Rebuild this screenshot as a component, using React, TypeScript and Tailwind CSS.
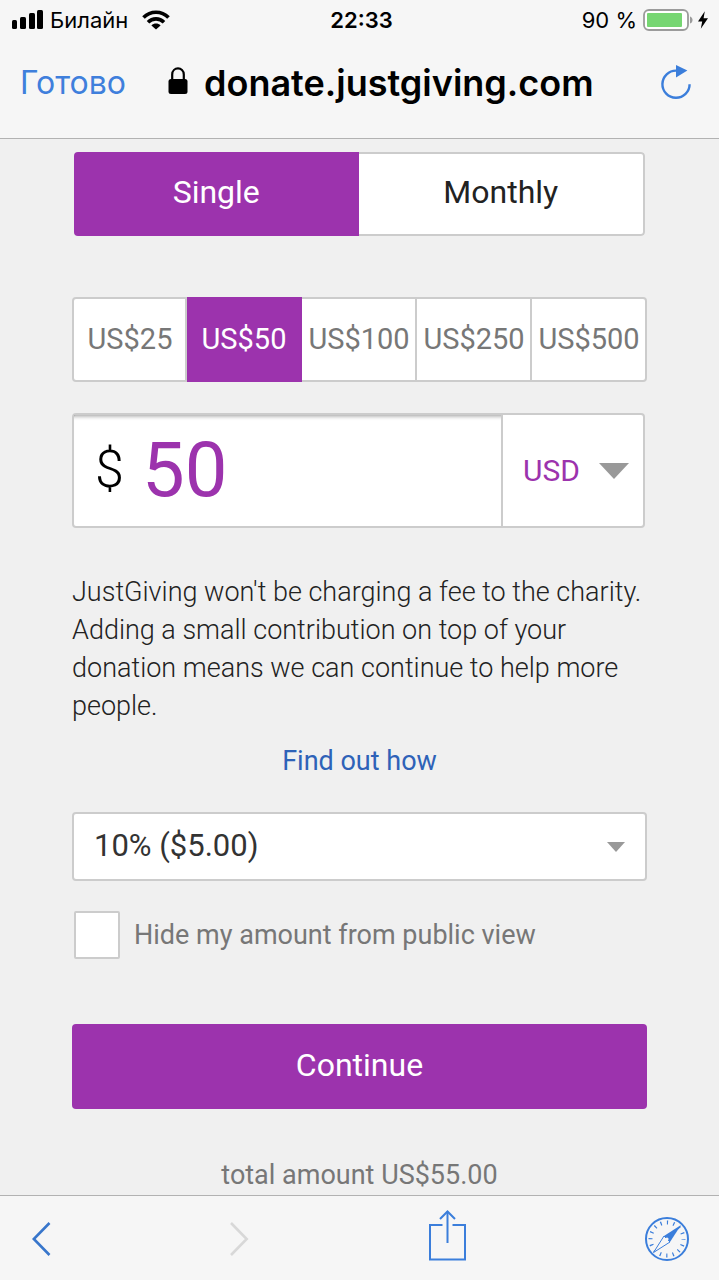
import { useState } from 'react'

const presets = [25, 50, 100, 250, 500]

function StatusBar() {
  return (
    <div className="grid grid-cols-3 items-center h-10 pl-3 pr-2.5 text-[22px] leading-7 text-black">
      <div className="flex items-center">
        <svg className="w-8 h-5" viewBox="0 0 32 20">
          <rect x="0" y="10" width="5" height="9" rx="1.5" />
          <rect x="8" y="7" width="6" height="12" rx="1.5" />
          <rect x="17" y="3" width="6" height="16" rx="1.5" />
          <rect x="25" y="0" width="6" height="19" rx="1.5" />
        </svg>
        <span className="ml-1.5">Билайн</span>
        <svg className="w-7 h-5 ml-3.5" viewBox="0 0 28 20">
          <g fill="none" stroke="black" strokeWidth="3.6">
            <path d="M1.5 7.6 C8.5 0.4 19.5 0.4 26.5 7.6" />
            <path d="M6 12.2 C10.5 7.8 17.5 7.8 22 12.2" />
          </g>
          <path d="M9.4 15.4 C12 13 16 13 18.6 15.4 L14 19.6 Z" />
        </svg>
      </div>
      <div className="pl-0.5 text-center font-semibold">22:33</div>
      <div className="flex items-center justify-end">
        <span>90 %</span>
        <svg className="w-[50px] h-[22px] ml-1.5" viewBox="0 0 50 22">
          <rect x="1" y="1" width="44" height="20" rx="5" fill="white" stroke="#9b9b9b" strokeWidth="1.8" />
          <rect x="4" y="4" width="35" height="14" rx="1" fill="#76d672" />
          <path d="M47 7.5 C50.4 8.5 50.4 13.5 47 14.5 Z" fill="#9b9b9b" />
        </svg>
        <svg className="w-3 h-5 ml-1" viewBox="0 0 12 20">
          <path d="M7.8 1.2 L1 11.4 H5.2 L3.8 18.8 L11 8.2 H6.6 Z" />
        </svg>
      </div>
    </div>
  )
}

function NavBar() {
  return (
    <div className="flex items-center h-[98px] pl-5 pr-7 pb-3">
      <button className="text-[32px] leading-10 text-[#3f7fdc]">Готово</button>
      <div className="flex items-center ml-[42px]">
        <svg className="w-5 h-7 mr-4 mb-1" viewBox="0 0 20 28">
          <path d="M4.2 14 V7.5 C4.2 -0.6 15.8 -0.6 15.8 7.5 V14" fill="none" stroke="black" strokeWidth="2.2" />
          <rect x="0.5" y="12" width="19" height="15" rx="2.5" />
        </svg>
        <span className="text-[36px] leading-10 font-semibold text-black">donate.justgiving.com</span>
      </div>
      <button aria-label="Reload" className="ml-auto">
        <svg className="w-[30px] h-9" viewBox="0 0 30 36">
          <path d="M28.6 19.2 A13.6 13.6 0 1 1 15.5 5.6" fill="none" stroke="#3b7edb" strokeWidth="2.4" />
          <path d="M15 0 L26.4 5.6 L15 12.6 Z" fill="#3b7edb" />
        </svg>
      </button>
    </div>
  )
}

function Toolbar() {
  return (
    <footer className="flex items-center justify-between h-[85px] pt-0.5 pl-8 pr-[29px] border-t border-[#b2b2b2] bg-[#f6f6f6]">
      <button aria-label="Back">
        <svg className="w-5 h-9" viewBox="0 0 20 36">
          <path d="M17.5 2 L1.8 18 L17.5 34" fill="none" stroke="#3876cb" strokeWidth="2.6" />
        </svg>
      </button>
      <button aria-label="Forward" disabled>
        <svg className="w-5 h-9" viewBox="0 0 20 36">
          <path d="M1 2 L16.7 18 L1 34" fill="none" stroke="#d8d8d8" strokeWidth="2.6" />
        </svg>
      </button>
      <button aria-label="Share" className="pb-1.5">
        <svg className="w-[38px] h-[52px]" viewBox="0 0 38 52" fill="none" stroke="#3b7edb" strokeWidth="2">
          <path d="M14.5 15 H2 V49.5 H37 V15 H24.5" />
          <path d="M19.5 33 V1.5" />
          <path d="M12 9 L19.5 1.5 L27 9" />
        </svg>
      </button>
      <button aria-label="Open in Safari">
        <svg className="w-[46px] h-[46px]" viewBox="0 0 46 46">
          <circle cx="23" cy="23" r="21" fill="none" stroke="#3b7edb" strokeWidth="2" />
          <circle cx="23" cy="23" r="16.5" fill="none" stroke="#3b7edb" strokeWidth="4" strokeDasharray="1.2 5.28" strokeDashoffset="0.6" />
          <path d="M37 9 L26 26 L20 20 Z" fill="#3b7edb" />
          <path d="M9.5 36.5 L20 20 L26 26 Z" fill="#f6f6f6" stroke="#3b7edb" strokeWidth="1" />
          <circle cx="23" cy="23" r="1.6" fill="#f6f6f6" />
        </svg>
      </button>
    </footer>
  )
}

export default function App() {
  const [frequency, setFrequency] = useState<'Single' | 'Monthly'>('Single')
  const [amount, setAmount] = useState('50')

  return (
    <div className="min-h-screen flex flex-col bg-[#f0f0f0] font-['Roboto',sans-serif]">
      <header className="border-b border-[#b2b2b2] bg-[#f6f6f6] font-['Inter',sans-serif]">
        <StatusBar />
        <NavBar />
      </header>

      <main className="flex-1 px-[72px] pt-[13px]">
        <div className="flex h-[84px] mx-0.5 rounded overflow-hidden">
          {(['Single', 'Monthly'] as const).map((f) => (
            <button
              key={f}
              onClick={() => setFrequency(f)}
              className={`flex-1 pb-1 text-[32px] ${frequency === f ? 'bg-[#9c33ad] text-white' : 'bg-white text-[#222] border-2 border-l-0 border-[#ccc] rounded-r'}`}
            >
              {f}
            </button>
          ))}
        </div>

        <div className="grid grid-cols-5 h-[85px] mt-[61px]">
          {presets.map((p) => (
            <button
              key={p}
              onClick={() => setAmount(String(p))}
              className={`border-y-2 border-r-2 first:border-l-2 first:rounded-l last:rounded-r pl-px text-[29px] ${amount === String(p) ? 'bg-[#9c33ad] border-[#9c33ad] text-white' : 'bg-white border-[#ccc] text-[#777]'}`}
            >
              US${p}
            </button>
          ))}
        </div>

        <div className="flex h-[115px] mt-[31px] mr-0.5 bg-white border-2 border-[#ccc] rounded">
          <div className="flex flex-1 min-w-0 items-center shadow-[inset_0_5px_4px_-4px_#999]">
            <label htmlFor="amount" className="w-[68px] pl-[21px] pb-0.5 text-[52px] leading-[60px] text-black font-light">$</label>
            <input
              id="amount"
              value={amount}
              onChange={(e) => setAmount(e.target.value)}
              className="flex-1 min-w-0 pb-0.5 text-[76px] leading-[90px] text-[#9c33ad] outline-none"
            />
          </div>
          <div className="relative w-[142px] border-l-2 border-[#ccc]">
            <select aria-label="Currency" className="appearance-none w-full h-full pl-5 text-[30px] text-[#9c33ad] outline-none">
              <option>USD</option>
            </select>
            <svg className="absolute right-3.5 top-1/2 -translate-y-1/2 w-[30px] h-4 pointer-events-none" viewBox="0 0 30 16">
              <path d="M0 0 H30 L15 16 Z" fill="#999" />
            </svg>
          </div>
        </div>

        <p className="mt-[45px] text-[27px] leading-[38px] font-light text-[#222]">
          JustGiving won't be charging a fee to the charity. Adding a small contribution on top of your donation means we can continue to help more people.
        </p>
        <div className="mt-[17px] text-center text-[27px] leading-[38px]">
          <a href="#" className="text-[#2e62b8]">Find out how</a>
        </div>

        <div className="relative h-[69px] mt-8 bg-white border-2 border-[#ccc] rounded">
          <select aria-label="Contribution" className="appearance-none w-full h-full pl-5 pb-px text-[31px] text-[#333] outline-none">
            <option>10% ($5.00)</option>
          </select>
          <svg className="absolute right-5 top-1/2 -translate-y-1/2 w-[18px] h-[10px] pointer-events-none" viewBox="0 0 18 10">
            <path d="M0 0 H18 L9 10 Z" fill="#999" />
          </svg>
        </div>

        <div className="flex items-center mt-[30px] mx-0.5">
          <input id="hide" type="checkbox" className="appearance-none w-[46px] h-12 bg-white border-2 border-[#ccc] rounded-xs checked:bg-[#9c33ad]" />
          <label htmlFor="hide" className="pl-[14px] text-[27px] leading-[38px] text-[#777]">Hide my amount from public view</label>
        </div>

        <button className="block w-full h-[85px] mt-[65px] pb-1 rounded bg-[#9c33ad] text-[32px] text-white">Continue</button>

        <p className="mt-[47px] text-center text-[27px] leading-[38px] text-[#777]">total amount US$55.00</p>
      </main>

      <Toolbar />
    </div>
  )
}
